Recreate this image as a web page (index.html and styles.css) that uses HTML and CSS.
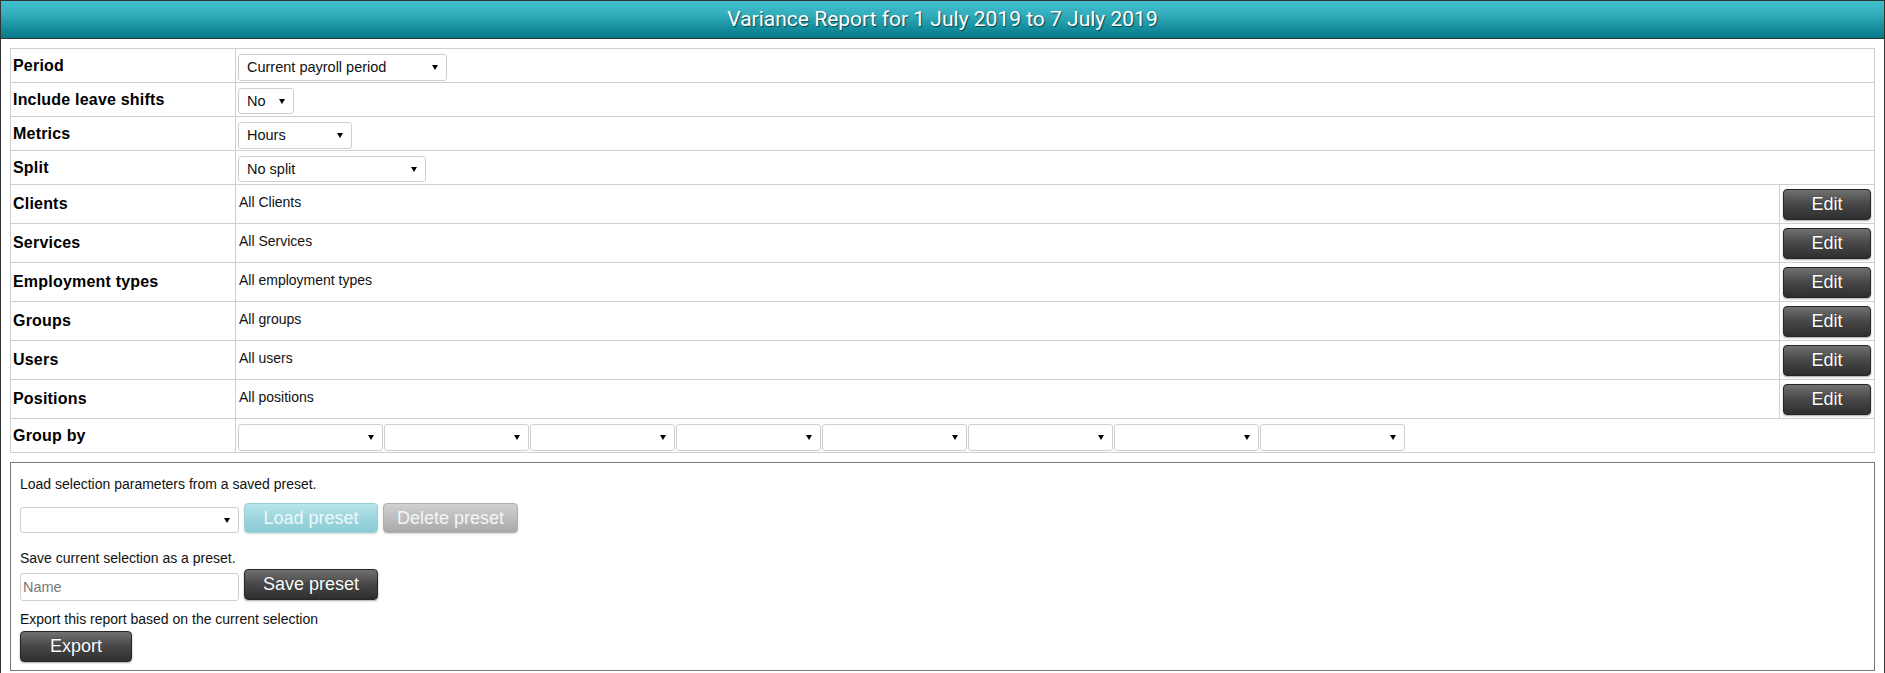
FILE: index.html
```html
<!DOCTYPE html>
<html>
<head>
<meta charset="utf-8">
<title>Variance Report</title>
<link rel="stylesheet" href="styles.css">
</head>
<body>
<div class="page">
  <div class="header">Variance Report for 1 July 2019 to 7 July 2019</div>
  <div class="content">
    <table class="params">
      <tr class="r-sel">
        <th>Period</th>
        <td class="selcell" colspan="2"><span class="sel w-period"><select><option>Current payroll period</option></select></span></td>
      </tr>
      <tr class="r-sel">
        <th>Include leave shifts</th>
        <td class="selcell" colspan="2"><span class="sel w-no"><select><option>No</option></select></span></td>
      </tr>
      <tr class="r-sel">
        <th>Metrics</th>
        <td class="selcell" colspan="2"><span class="sel w-hours"><select><option>Hours</option></select></span></td>
      </tr>
      <tr class="r-sel">
        <th>Split</th>
        <td class="selcell" colspan="2"><span class="sel w-split"><select><option>No split</option></select></span></td>
      </tr>
      <tr class="r-edit">
        <th>Clients</th>
        <td class="val"><div class="val-text">All Clients</div></td>
        <td class="edit"><button class="btn btn-dark btn-edit">Edit</button></td>
      </tr>
      <tr class="r-edit">
        <th>Services</th>
        <td class="val"><div class="val-text">All Services</div></td>
        <td class="edit"><button class="btn btn-dark btn-edit">Edit</button></td>
      </tr>
      <tr class="r-edit">
        <th>Employment types</th>
        <td class="val"><div class="val-text">All employment types</div></td>
        <td class="edit"><button class="btn btn-dark btn-edit">Edit</button></td>
      </tr>
      <tr class="r-edit">
        <th>Groups</th>
        <td class="val"><div class="val-text">All groups</div></td>
        <td class="edit"><button class="btn btn-dark btn-edit">Edit</button></td>
      </tr>
      <tr class="r-edit">
        <th>Users</th>
        <td class="val"><div class="val-text">All users</div></td>
        <td class="edit"><button class="btn btn-dark btn-edit">Edit</button></td>
      </tr>
      <tr class="r-edit">
        <th>Positions</th>
        <td class="val"><div class="val-text">All positions</div></td>
        <td class="edit"><button class="btn btn-dark btn-edit">Edit</button></td>
      </tr>
      <tr class="r-sel">
        <th>Group by</th>
        <td class="selcell" colspan="2">
          <div class="groupby">
            <span class="sel w-group"><select><option></option></select></span>
            <span class="sel w-group"><select><option></option></select></span>
            <span class="sel w-group"><select><option></option></select></span>
            <span class="sel w-group"><select><option></option></select></span>
            <span class="sel w-group"><select><option></option></select></span>
            <span class="sel w-group"><select><option></option></select></span>
            <span class="sel w-group"><select><option></option></select></span>
            <span class="sel w-group"><select><option></option></select></span>
          </div>
        </td>
      </tr>
    </table>

    <div class="presets">
      <div class="p-text">Load selection parameters from a saved preset.</div>
      <div class="p-row p-row-load">
        <span class="sel w-preset"><select><option></option></select></span>
        <button class="btn btn-load">Load preset</button>
        <button class="btn btn-delete">Delete preset</button>
      </div>
      <div class="p-text p-gap-big">Save current selection as a preset.</div>
      <div class="p-row p-row-save">
        <input class="name-input" type="text" placeholder="Name">
        <button class="btn btn-dark btn-save">Save preset</button>
      </div>
      <div class="p-text p-gap-mid">Export this report based on the current selection</div>
      <div class="p-row p-row-export">
        <button class="btn btn-dark btn-export">Export</button>
      </div>
    </div>
  </div>
</div>
</body>
</html>
```

FILE: styles.css
```css
html, body {
  margin: 0;
  padding: 0;
  overflow: hidden;
  background: #fff;
}

body {
  font-family: "Liberation Sans", Arial, sans-serif;
  color: #000;
}

.page {
  border: 1px solid #333;
  border-bottom: none;
  box-sizing: border-box;
  width: 1885px;
  min-height: 700px;
}

.header {
  height: 37px;
  line-height: 37px;
  border-bottom: 1px solid #333;
  background: linear-gradient(#42bfcc, #34aebd 35%, #17909f 70%, #08788a);
  color: #fff;
  text-align: center;
  font-family: Roboto, "Liberation Sans", sans-serif;
  font-size: 21px;
  text-shadow: 1px 1px 1px rgba(0, 0, 0, 0.55);
}

.content {
  padding: 9px 9px 10px 9px;
}

/* parameter table */
.params {
  width: 100%;
  border-collapse: collapse;
  border: 1px solid #cfcfcf;
}

.params th,
.params td {
  border: 1px solid #cfcfcf;
  padding: 0;
  vertical-align: middle;
}

.params th {
  width: 222px;
  padding-left: 2px;
  text-align: left;
  font-size: 16px;
  font-weight: bold;
  letter-spacing: 0.2px;
  color: #000;
}

.r-sel th,
.r-sel td {
  height: 33px;
}

.r-edit th,
.r-edit td {
  height: 38px;
}

.params td.selcell {
  padding-left: 2px;
}

.params td.val {
  padding-left: 3px;
  font-size: 14px;
  color: #111;
}

.val-text {
  line-height: 16px;
  margin-bottom: 4px;
}

.params td.edit {
  width: 88px;
  padding: 0 3px;
}

/* select look-alike */
.sel {
  position: relative;
  display: block;
  height: 27px;
  box-sizing: border-box;
}

.selcell > .sel,
.groupby {
  margin-top: 3px;
}

.sel select {
  -webkit-appearance: none;
  appearance: none;
  display: block;
  width: 100%;
  height: 100%;
  margin: 0;
  padding: 0 20px 0 8px;
  box-sizing: border-box;
  border: 1px solid #cfcfcf;
  border-radius: 3px;
  background: #fff;
  font-family: "Liberation Sans", Arial, sans-serif;
  font-size: 14.5px;
  color: #111;
  outline: none;
}

.sel::after {
  content: "";
  position: absolute;
  right: 9px;
  top: 50%;
  margin-top: -2px;
  width: 0;
  height: 0;
  border-left: 3px solid transparent;
  border-right: 3px solid transparent;
  border-top: 5px solid #000;
  pointer-events: none;
}

.w-period { width: 209px; }
.w-no { width: 56px; height: 26px; }
.w-hours { width: 114px; }
.w-split { width: 188px; height: 26px; }
.w-group { width: 145px; }
.w-preset { width: 219px; height: 26px; }

.groupby {
  display: flex;
  gap: 1px;
}

/* buttons */
.btn {
  display: block;
  margin: 0;
  padding: 0;
  box-sizing: border-box;
  height: 31px;
  border-radius: 4px;
  font-family: "Liberation Sans", Arial, sans-serif;
  font-size: 18px;
  color: #fff;
  cursor: pointer;
}

.btn-dark {
  border: 1px solid #262626;
  background: linear-gradient(#717171, #4a4a4a 45%, #2e2e2e);
  box-shadow: 0 1px 2px rgba(0, 0, 0, 0.35);
  text-shadow: 0 0 1px rgba(0, 0, 0, 0.6);
}

.btn-edit {
  width: 88px;
}

.btn-load {
  width: 134px;
  height: 30px;
  border: 1px solid #9bcfd6;
  background: linear-gradient(#b8e6ec, #9dd6de 50%, #8ccbd4);
  color: #eef9fb;
  box-shadow: 0 1px 2px rgba(0, 0, 0, 0.15);
}

.btn-delete {
  width: 135px;
  height: 30px;
  border: 1px solid #b0b0b0;
  background: linear-gradient(#d0d0d0, #bdbdbd 50%, #a9a9a9);
  color: #f5f5f5;
  box-shadow: 0 1px 2px rgba(0, 0, 0, 0.15);
}

.btn-save {
  width: 134px;
}

.btn-export {
  width: 112px;
}

/* presets box */
.presets {
  margin-top: 9px;
  border: 1px solid #777;
  padding: 13px 9px 8px 9px;
}

.p-text {
  font-size: 14px;
  line-height: 16px;
  color: #111;
}

.p-gap-big {
  margin-top: 17px;
}

.p-gap-mid {
  margin-top: 11px;
}

.p-row {
  display: flex;
  align-items: flex-end;
  gap: 5px;
}

.p-row-load {
  margin-top: 11px;
}

.p-row-save {
  margin-top: 3px;
}

.p-row-export {
  margin-top: 4px;
}

.name-input {
  width: 219px;
  height: 28px;
  margin: 0 0 -1px 0;
  padding: 0 0 0 2px;
  box-sizing: border-box;
  border: 1px solid #cfcfcf;
  border-radius: 3px;
  font-family: "Liberation Sans", Arial, sans-serif;
  font-size: 14.5px;
  color: #111;
  outline: none;
}

.name-input::placeholder {
  color: #777;
}
```
